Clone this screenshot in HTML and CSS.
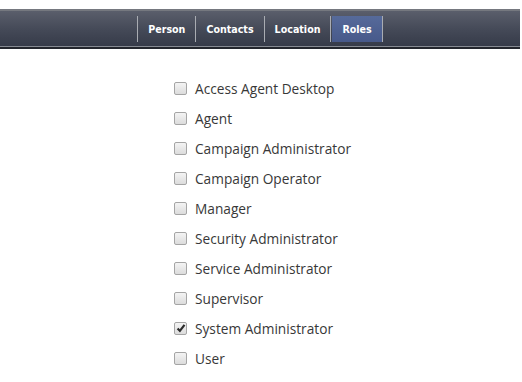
FILE: index.html
```html
<!DOCTYPE html>
<html lang="en">
<head>
  <meta charset="UTF-8">
  <title>User Roles</title>
  <link rel="stylesheet" href="styles.css">
</head>
<body>
  <div class="tabbar">
    <ul class="tabs">
      <li><a href="#">Person</a></li>
      <li><a href="#">Contacts</a></li>
      <li><a href="#">Location</a></li>
      <li class="active"><a href="#">Roles</a></li>
    </ul>
  </div>

  <ul class="roles">
    <li><label><span class="box"></span>Access Agent Desktop</label></li>
    <li><label><span class="box"></span>Agent</label></li>
    <li><label><span class="box"></span>Campaign Administrator</label></li>
    <li><label><span class="box"></span>Campaign Operator</label></li>
    <li><label><span class="box"></span>Manager</label></li>
    <li><label><span class="box"></span>Security Administrator</label></li>
    <li><label><span class="box"></span>Service Administrator</label></li>
    <li><label><span class="box"></span>Supervisor</label></li>
    <li><label><span class="box checked"><svg width="10" height="10" viewBox="0 0 10 10"><path d="M1.6 5.4 L3.9 7.9 L8.5 1.8" fill="none" stroke="#2b2b2b" stroke-width="2.2"/></svg></span>System Administrator</label></li>
    <li><label><span class="box"></span>User</label></li>
  </ul>
</body>
</html>
```

FILE: styles.css
```css
body {
  margin: 0;
  background: #fff;
  font-family: "Open Sans", Arial, sans-serif;
}
.tabbar {
  margin-top: 9px;
  margin-right: 2px;
  height: 36px;
  border-top: 2px solid #75787f;
  border-bottom: 2px solid #23262d;
  background: linear-gradient(#5a5e6b, #454a58 50%, #353a48);
  box-shadow: inset 0 -1px 0 #868a92;
  display: flex;
  justify-content: center;
  align-items: flex-start;
}
.tabs {
  list-style: none;
  margin: 5px 0 0 0;
  padding: 0;
  display: flex;
  border-left: 1px solid #a9acb2;
}
.tabs li {
  border-right: 1px solid #a9acb2;
  height: 26px;
}
.tabs a {
  display: block;
  height: 26px;
  line-height: 27px;
  padding: 0 10px;
  color: #fff;
  text-decoration: none;
  font-family: "DejaVu Sans Condensed", "DejaVu Sans", Tahoma, sans-serif;
  font-weight: bold;
  font-size: 10.6px;
}
.tabs .active a {
  background: linear-gradient(#566a9a, #47598a);
  margin-left: 1px;
}
.roles {
  list-style: none;
  margin: 29px 0 0 174px;
  padding: 0;
}
.roles li {
  height: 30px;
}
.roles label {
  display: flex;
  align-items: center;
  font-size: 13.7px;
  color: #383838;
  height: 20px;
}
.box {
  width: 11px;
  height: 11px;
  border: 1px solid #a5a5a5;
  border-radius: 2px;
  background: linear-gradient(#f4f4f4, #dcdcdc);
  margin-right: 8px;
  display: flex;
  align-items: center;
  justify-content: center;
}
```
